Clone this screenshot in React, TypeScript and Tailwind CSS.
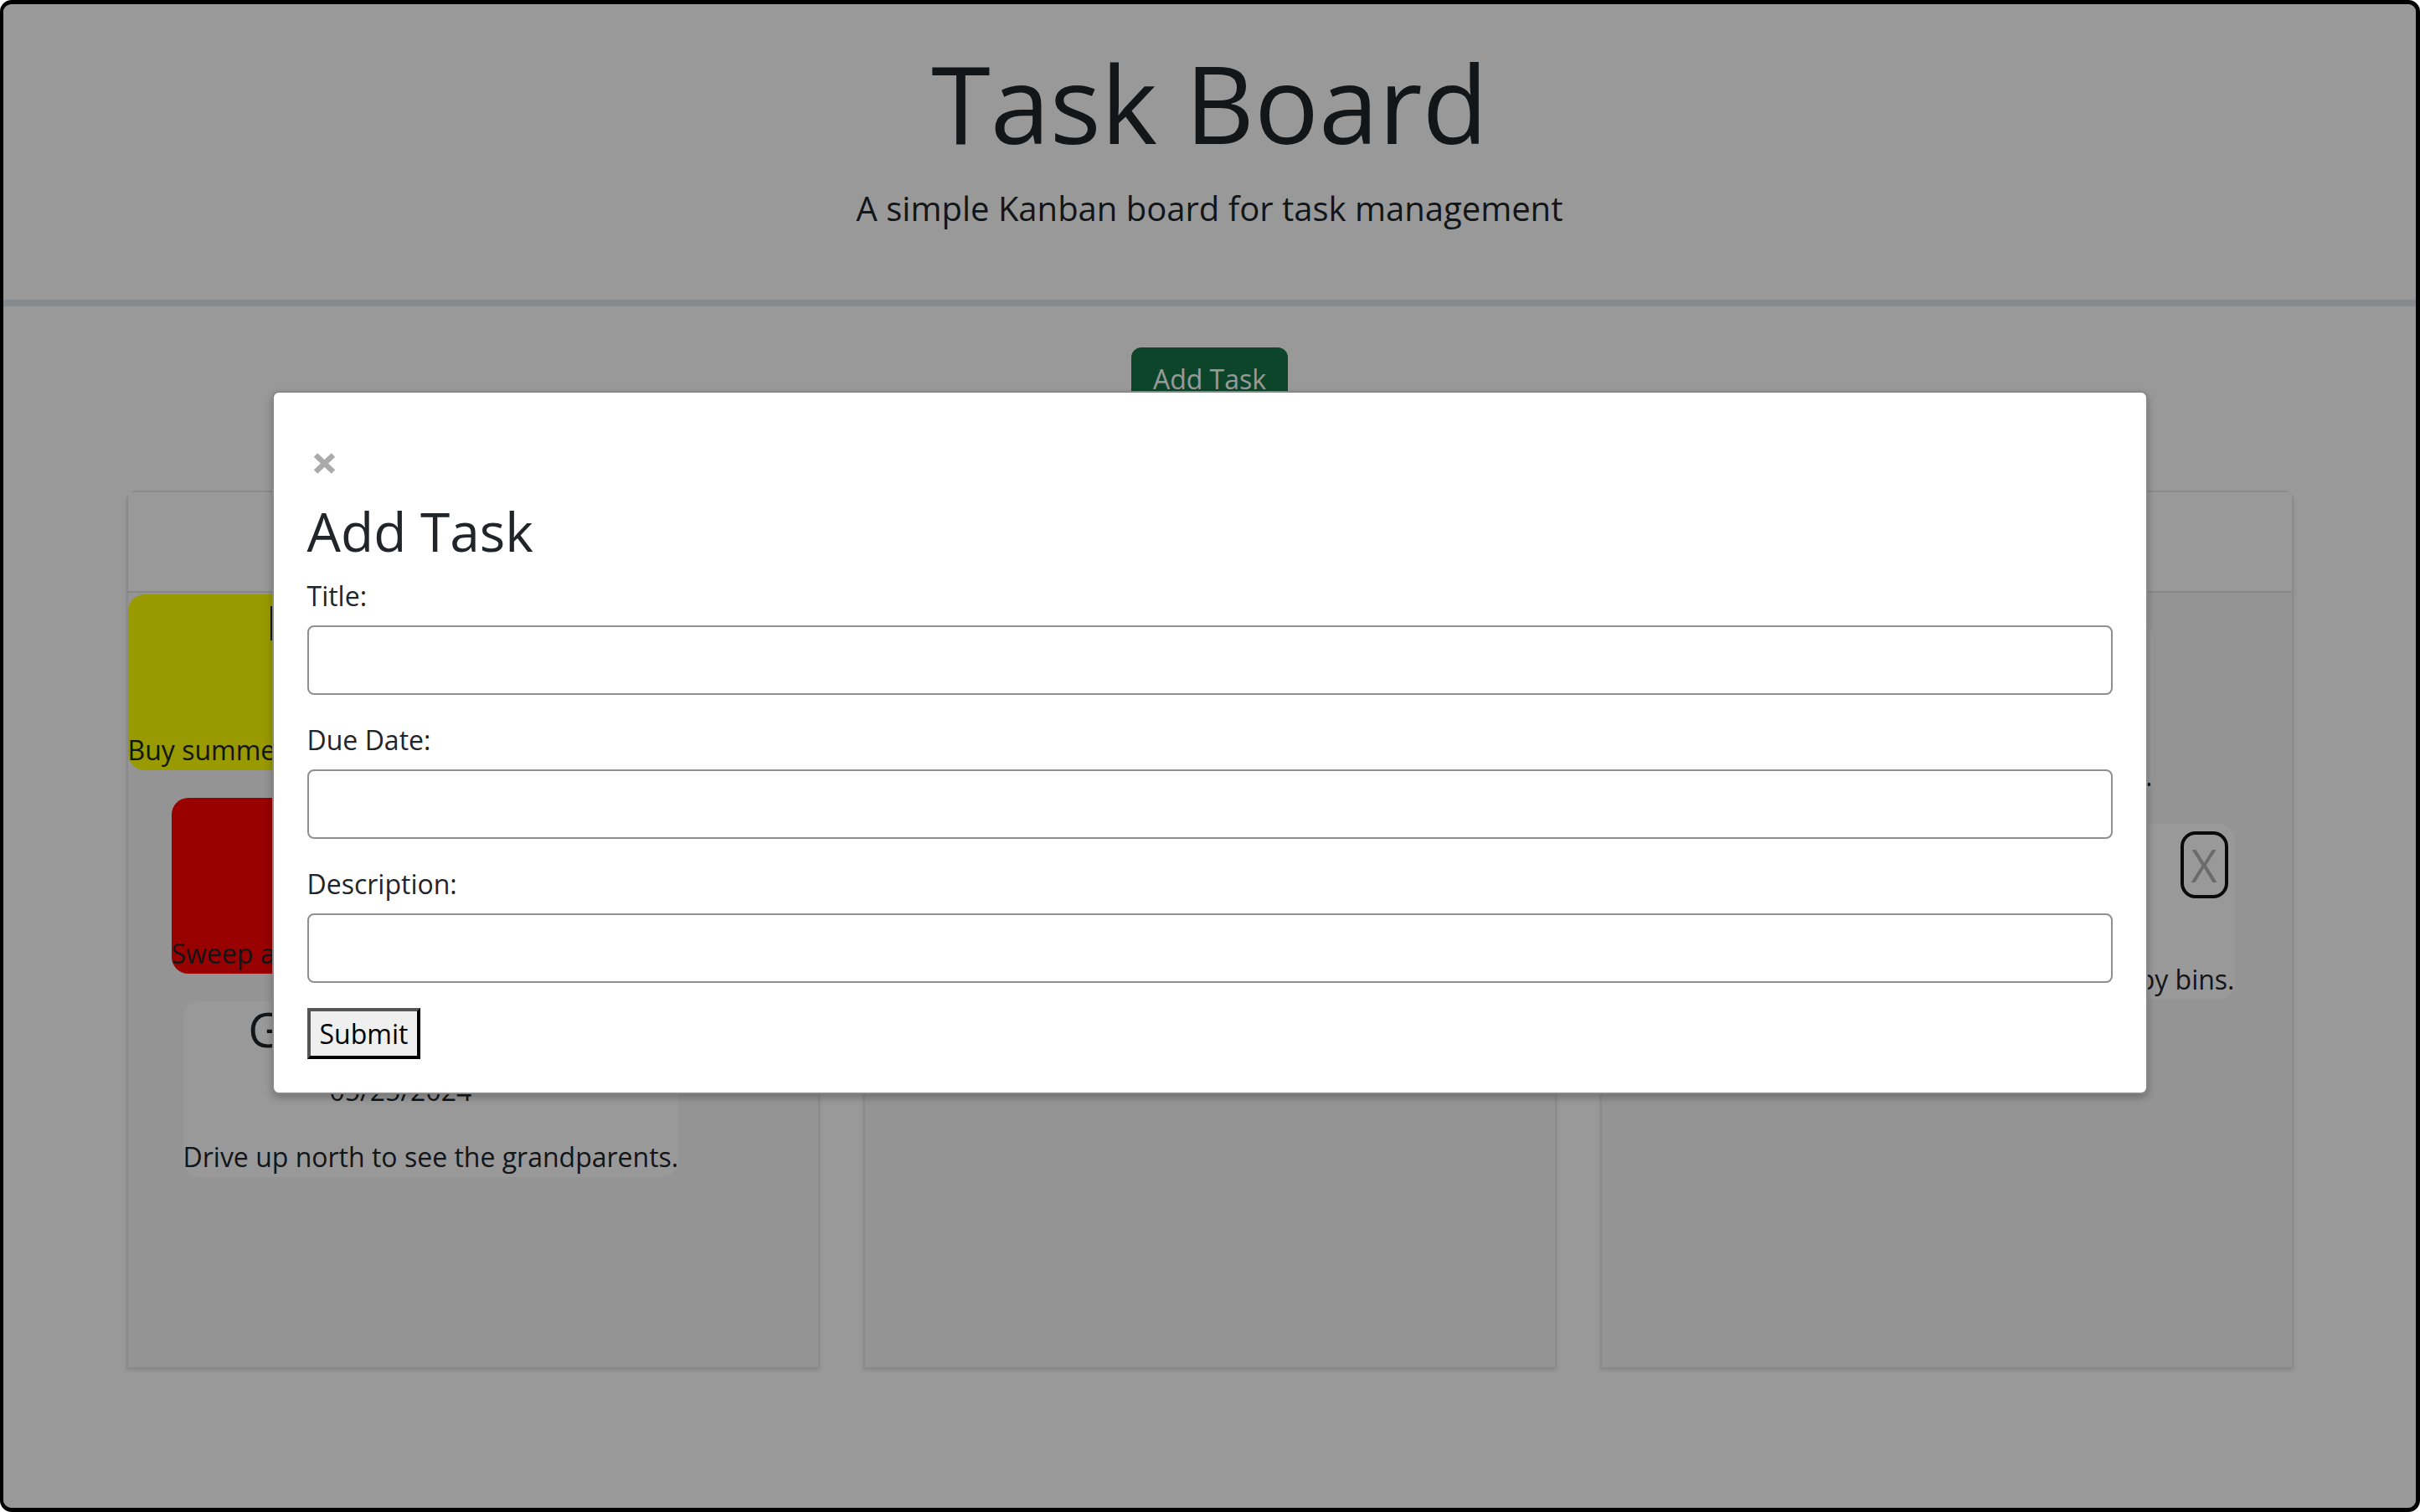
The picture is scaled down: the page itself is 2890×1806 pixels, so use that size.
import React from 'react';

type Task = {
  id: number;
  title: string;
  date: string;
  description: string;
  color: string;
  offset: string;
};

const todoTasks: Task[] = [
  { id: 1, title: 'Beach Trip', date: '06/01/2024', description: 'Buy summer clothes and sunscreen for a trip.', color: 'bg-[#ffff00]', offset: 'ml-0' },
  { id: 2, title: 'Clean', date: '05/20/2024', description: 'Sweep and mop the kitchen floor.', color: 'bg-[#ff0000]', offset: 'ml-[52px]' },
  { id: 3, title: 'Grandparents', date: '05/25/2024', description: 'Drive up north to see the grandparents.', color: 'bg-white', offset: 'ml-[66px]' },
];

const doneTasks: Task[] = [
  { id: 4, title: 'Bills', date: '05/01/2024', description: 'Pay the electricity and water bills.', color: 'bg-white', offset: 'mt-[31px] mr-[166px]' },
  { id: 5, title: 'Chores', date: '05/10/2024', description: 'Rinse out the soapy bins.', color: 'bg-white', offset: 'mr-[68px]' },
];

function TaskCard({ task }: { task: Task }) {
  return (
    <div className={`relative w-fit rounded-[20px] ${task.color} ${task.offset}`}>
      <h3 className="mb-[16px] pr-[72px] text-center text-[56px] leading-[67px]">{task.title}</h3>
      <p className="mb-[31px] pr-[72px] text-center text-[32px] leading-[48px]">{task.date}</p>
      <p className="whitespace-nowrap text-[32px] leading-[48px]">{task.description}</p>
      <button className="absolute right-[8px] top-[9px] flex h-[80px] w-[57px] items-center justify-center rounded-[18px] border-[4px] border-[#111111] text-[54px] leading-none text-[#b3b3b3]">
        X
      </button>
    </div>
  );
}

function Column({ title, tasks, align }: { title: string; tasks: Task[]; align: string }) {
  return (
    <div className="flex h-[1049px] flex-col rounded-t-[12px] border-2 border-[#e6e6e6] shadow-[0_2px_4px_rgba(0,0,0,0.12)]">
      <div className="flex h-[120px] items-center justify-center border-b-2 border-[#e2e2e2] bg-white text-[56px]">
        {title}
      </div>
      <div className={`flex flex-1 flex-col gap-[33px] bg-[#f7f7f7] pt-[2px] ${align}`}>
        {tasks.map((t) => (
          <TaskCard key={t.id} task={t} />
        ))}
      </div>
    </div>
  );
}

function AddTaskModal() {
  const fields = ['Title:', 'Due Date:', 'Description:'];
  return (
    <div className="absolute inset-0 flex justify-center bg-black/40 pt-[462px]">
      <div className="h-fit w-[2240px] rounded-[8px] border-2 border-[#888888] bg-white p-[40px] shadow-[0_4px_10px_rgba(0,0,0,0.25)]">
        {/* close */}
        <div className="h-[87px] pl-[8px] pt-[33px]">
          <svg width="25" height="23" viewBox="0 0 25 23" overflow="visible">
            <path d="M2 1.5 L23 21.5 M23 1.5 L2 21.5" stroke="#aaaaaa" strokeWidth="6.5" />
          </svg>
        </div>
        <h2 className="mb-[15px] text-[64px] leading-[77px]">Add Task</h2>
        {fields.map((f) => (
          <div key={f}>
            <label className="mb-[11px] block text-[32px] leading-[48px]">{f}</label>
            <input className="mb-[30px] block h-[83px] w-full rounded-[8px] border-2 border-[#8f8f8f] bg-white" />
          </div>
        ))}
        <button className="h-[61px] border-[4px] border-b-black border-l-[#555555] border-r-black border-t-[#555555] bg-[#efefef] px-[11px] text-[32px] leading-[48px] text-black">
          Submit
        </button>
      </div>
    </div>
  );
}

export default function App() {
  return (
    <div className="h-[1806px] w-[2890px] bg-white font-['Open_Sans',sans-serif] text-[#212529]">
      <div className="relative h-full overflow-hidden rounded-[14px] border-[5px] border-l-[4px] border-black bg-white">
        {/* Header */}
        <header className="border-b-[8px] border-[#e0e8ee] pb-[79px] pt-[41px] text-center">
          <h1 className="mb-[19px] text-[128px] leading-[154px]">Task Board</h1>
          <p className="text-[40px] leading-[60px]">A simple Kanban board for task management</p>
        </header>

        <div className="mt-[49px] flex justify-center">
          <button className="rounded-[12px] border-2 border-[#157347] bg-[#157347] px-[24px] py-[12px] text-[32px] leading-[48px] text-white">
            Add Task
          </button>
        </div>

        {/* Board */}
        <div className="mx-auto mt-[95px] grid w-[2588px] grid-cols-3 gap-x-[52px]">
          <Column title="To Do" tasks={todoTasks} align="items-start" />
          <Column title="In Progress" tasks={[]} align="items-start" />
          <Column title="Done" tasks={doneTasks} align="items-end" />
        </div>

        <AddTaskModal />
      </div>
    </div>
  );
}
